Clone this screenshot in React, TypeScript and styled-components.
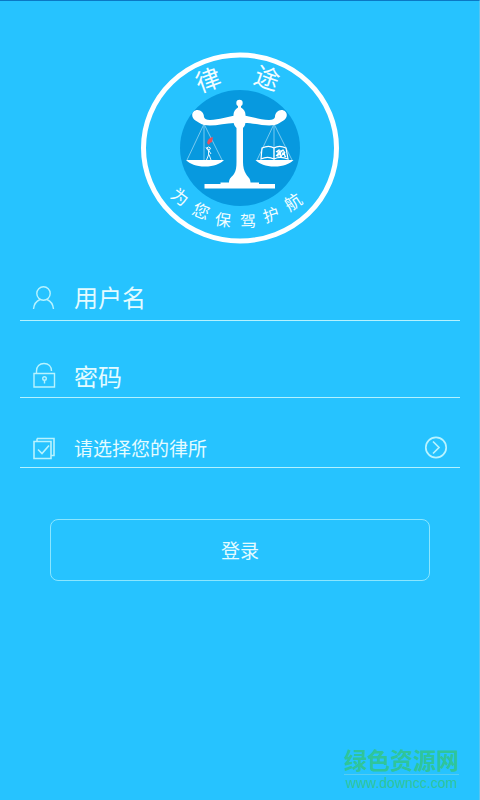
import React from "react";
import styled, { createGlobalStyle } from "styled-components";

const GlobalStyle = createGlobalStyle`
  * { box-sizing: border-box; }
  body {
    margin: 0;
    background: #26c3ff;
    font-family: "Noto Sans CJK SC", "Noto Sans", sans-serif;
  }
`;

const Page = styled.main`
  display: flex;
  flex-direction: column;
  min-height: 100vh;
  background: #26c3ff;
  border-top: 1px solid #0b78c4;
  border-right: 1px solid #58c4f0;
  color: #e4fbff;
`;

const LogoArea = styled.header`
  display: flex;
  justify-content: center;
  padding-top: 50px;
`;

const Form = styled.form`
  display: flex;
  flex-direction: column;
  padding: 0 19px 0 20px;
  margin-top: 28px;
`;

const Field = styled.label<{ $height: number; $top?: number }>`
  display: flex;
  align-items: center;
  height: ${(p) => p.$height}px;
  padding: ${(p) => p.$top ?? 0}px 12px 0 12px;
  border-bottom: 1px solid #b4f2ff;

  svg {
    flex: none;
  }
`;

const TextInput = styled.input`
  flex: 1;
  min-width: 0;
  height: 40px;
  margin-left: 18px;
  padding: 0;
  border: 0;
  outline: 0;
  background: transparent;
  color: #e4fbff;
  font: 24px "Noto Sans CJK SC", sans-serif;

  &::placeholder {
    color: #e4fbff;
    opacity: 1;
  }
`;

const OfficeSelect = styled.select`
  flex: 1;
  min-width: 0;
  height: 32px;
  margin-left: 18px;
  padding: 0;
  border: 0;
  outline: 0;
  appearance: none;
  background: transparent;
  color: #e4fbff;
  font: 19px "Noto Sans CJK SC", sans-serif;
`;

const LoginButton = styled.button`
  height: 62px;
  margin: 51px 30px 0;
  padding: 0 0 2px;
  border: 1px solid #8ae6ff;
  border-radius: 8px;
  background: transparent;
  color: #e4fbff;
  font: 19px "Noto Sans CJK SC", sans-serif;
`;

const Watermark = styled.footer`
  display: flex;
  flex-direction: column;
  align-items: center;
  align-self: flex-end;
  margin: auto 20px 9px 0;
  color: #2fc59b;
`;

const WatermarkName = styled.strong`
  border-bottom: 1px solid #58cdf2;
  font-family: "Liberation Sans", "Noto Sans CJK SC", sans-serif;
  font-size: 23px;
  font-weight: 700;
  line-height: 26px;
`;

const WatermarkSite = styled.span`
  font: 14px/16px "Liberation Sans", sans-serif;
`;

const LogoText = styled.text`
  fill: #f2fdff;
  font-family: "Noto Sans CJK SC", sans-serif;
  text-anchor: middle;
`;

const glyphs = [
  { char: "律", x: 68, y: 29, angle: -20, size: 25 },
  { char: "途", x: 127, y: 27, angle: 19, size: 25 },
  { char: "为", x: 40, y: 146, angle: 36, size: 17 },
  { char: "您", x: 61, y: 160, angle: 22, size: 17 },
  { char: "保", x: 83, y: 169, angle: 8, size: 16 },
  { char: "驾", x: 108, y: 170, angle: -2, size: 16 },
  { char: "护", x: 131, y: 164, angle: -18, size: 16 },
  { char: "航", x: 153, y: 151, angle: -34, size: 17 },
];

const Logo = () => (
  <svg width="200" height="194" viewBox="0 0 200 194" role="img" aria-label="律途">
    <ellipse cx="100" cy="97" rx="96.5" ry="93" fill="none" stroke="#fff" strokeWidth="5" />
    <ellipse cx="100" cy="97" rx="60" ry="58" fill="#0799df" />
    {glyphs.map((g) => (
      <LogoText
        key={g.char}
        fontSize={g.size}
        transform={`translate(${g.x} ${g.y}) rotate(${g.angle})`}
        y={g.size * 0.37}
      >
        {g.char}
      </LogoText>
    ))}
    <g fill="none" stroke="#86cff2" strokeWidth="0.9">
      <path d="M64 73 47 109M64 73V109M64 73 82 109" />
      <path d="M134 73 117 109M134 73V109M134 73 152 109" />
    </g>
    <g fill="#fff">
      <circle cx="99.5" cy="52" r="3.2" />
      <path d="M98 54h3v2.5c3 1.500 4.500 4.500 4.500 7.500v6c0 3-.5 5-2.500 7v34c0 5 1 9 3 12 1.500 3 4.500 4 4.500 8.500h8.500V133H135v4.500H64.500V133H80.500v-1.500H89c0-4.500 3-5.500 5-8.500 2-3 2.500-7 2.500-12V77c-2-2-3-4-3-7v-6c0-3 1.500-6 4.500-7.500z" />
      <path d="M97 64.500C88 65 79 69 70 69 66.500 69 64.500 68 64 66 64 62 61 59 57.500 59 54.500 59 52.200 61.200 52.200 64c0 4.500 4.300 6 7.300 8C69 78 85 71 97 72zM102 64.500C111 65 120 69 129 69c3.500 0 5.500-1 6-3C135 62 138 59 141.500 59c3 0 5.300 2.200 5.300 5 0 4.500-4.300 6-7.300 8C130 78 114 71 102 72z" />
      <path d="M46 109h38c-4 4-10 6.500-19 6.500S50 113 46 109zM115.500 109h38c-4 4-10 6.500-19 6.500s-15-2.500-19-6.500z" />
    </g>
    <path d="m67 92 1-3 2-2 3-1-1 5-2 1-1 2z" fill="#e9505c" />
    <path d="M66.500 97l2-1 2 1-1 2zM68.500 99v5l-2 5M69 103.500l2 5.500M68.500 99l2.500 4M68 99.500l-2-3" fill="none" stroke="#e5f7ff" />
    <g fill="none" stroke="#fff" strokeWidth="1.2">
      <path d="M122 97c4-2 9-2 12 0 3-2 8-2 12 0l2 11c-5-2-10-2-14 0-4-2-9-2-13 0zM134 97v11" />
      <path d="M136 101l3-2 1 3 3-3 2 3M136 105l3-3 2 4 2-4 3 4M138 100v6M141 99l-1 8M144 100l1 6" />
    </g>
  </svg>
);

const iconProps = {
  width: 24,
  height: 26,
  viewBox: "0 0 24 26",
  fill: "none",
  stroke: "#b8f3ff",
  strokeWidth: 1.4,
  "aria-hidden": true,
} as const;

const UserIcon = () => (
  <svg {...iconProps}>
    <circle cx="11.500" cy="9.500" r="6.700" />
    <path d="M1.500 25c.4-4.500 3-8 6.500-9.500M15 15.500c3.500 1.500 6.100 5 6.500 9.500" />
  </svg>
);

const LockIcon = () => (
  <svg {...iconProps}>
    <path d="M2 11.500h20.500v13.500H2zM4.500 11.500V9C4.500 4.500 7.500 1.500 12 1.500s7.500 3 7.500 7.500" />
    <circle cx="12.500" cy="16.500" r="1.800" />
    <path d="M12.500 18.300V21.500" />
  </svg>
);

const CheckIcon = () => (
  <svg {...iconProps} strokeWidth={1.6}>
    <path d="M2 6.500h17v17H2zM5 3.500h17v17h-3M5 3.500v3" />
    <path d="m6 14.500 4 4 7-8" />
  </svg>
);

const ArrowIcon = () => (
  <svg {...iconProps} strokeWidth={1.7}>
    <circle cx="12" cy="12.500" r="10.200" />
    <path d="m9 6.500 6 6-6 6" />
  </svg>
);

export default function App() {
  return (
    <>
      <GlobalStyle />
      <Page>
        <LogoArea>
          <Logo />
        </LogoArea>
        <Form onSubmit={(e) => e.preventDefault()}>
          <Field $height={48}>
            <UserIcon />
            <TextInput type="text" placeholder="用户名" aria-label="用户名" />
          </Field>
          <Field $height={77} $top={32}>
            <LockIcon />
            <TextInput type="password" placeholder="密码" aria-label="密码" />
          </Field>
          <Field $height={70} $top={30}>
            <CheckIcon />
            <OfficeSelect aria-label="请选择您的律所">
              <option>请选择您的律所</option>
            </OfficeSelect>
            <ArrowIcon />
          </Field>
          <LoginButton type="submit">登录</LoginButton>
        </Form>
        <Watermark>
          <WatermarkName>绿色资源网</WatermarkName>
          <WatermarkSite>www.downcc.com</WatermarkSite>
        </Watermark>
      </Page>
    </>
  );
}
